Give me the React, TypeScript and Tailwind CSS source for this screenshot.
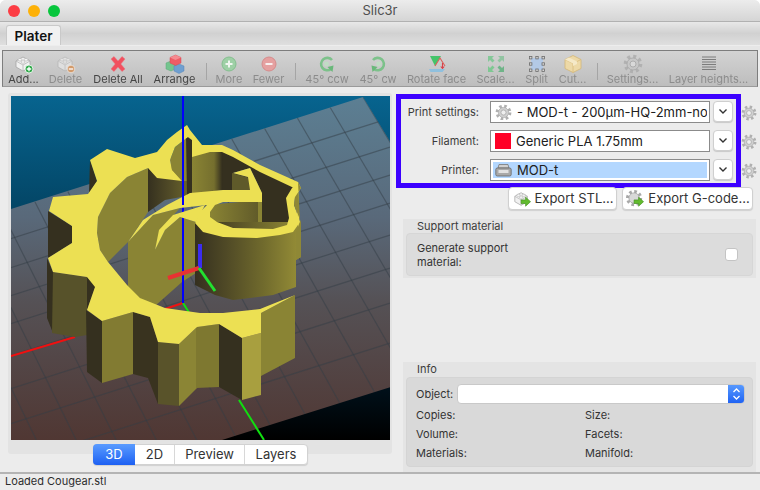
import type { ReactNode } from "react"

const font = "[font-family:Inter,'Liberation_Sans',sans-serif]"

function Brick({ faded = false }: { faded?: boolean }) {
  return (
    <g opacity={faded ? 0.55 : 1}>
      <path d="M2 7 L9 3 L16 7 L16 13 L9 17 L2 13 Z" fill="#f1f1f1" stroke="#a5a5a5" strokeWidth="0.8" />
      <path d="M2 7 L9 11 L16 7 M9 11 V17" fill="none" stroke="#b5b5b5" strokeWidth="0.8" />
      <ellipse cx="6" cy="5.8" rx="2" ry="1.2" fill="#fff" stroke="#aaa" strokeWidth="0.6" />
      <ellipse cx="12" cy="5.8" rx="2" ry="1.2" fill="#fff" stroke="#aaa" strokeWidth="0.6" />
      <ellipse cx="9" cy="8" rx="2" ry="1.2" fill="#fff" stroke="#aaa" strokeWidth="0.6" />
    </g>
  )
}

function GearIcon({ size = 16, className = "" }: { size?: number; className?: string }) {
  return (
    <svg width={size} height={size} viewBox="0 0 20 20" className={className}>
      <circle cx="10" cy="10" r="7.6" fill="none" stroke="#b0b0b0" strokeWidth="3.4" strokeDasharray="3 2.96" />
      <circle cx="10" cy="10" r="6" fill="#d0d0d0" stroke="#a5a5a5" strokeWidth="0.8" />
      <circle cx="10" cy="10" r="3" fill="#efefef" stroke="#a0a0a0" strokeWidth="0.8" />
    </svg>
  )
}

function RotateIcon({ flip = false }: { flip?: boolean }) {
  return (
    <g transform={flip ? "matrix(-1 0 0 1 20 0)" : undefined} opacity="0.85">
      <path d="M15 6 A6.2 6.2 0 1 0 14 15" fill="none" stroke="#6fc07f" strokeWidth="2.6" />
      <path d="M10.5 13 L16.5 11.5 L15.5 18 Z" fill="#58b56c" />
      <circle cx="9.5" cy="10" r="2.4" fill="#bfe0c4" />
    </g>
  )
}

const tools: { label: string; width: string; off?: boolean; icon: ReactNode }[] = [
  {
    label: "Add...",
    width: "w-[29px]",
    icon: (
      <>
        <Brick />
        <circle cx="15" cy="15" r="4" fill="#2fa84a" stroke="#fff" strokeWidth="0.8" />
        <path d="M15 12.8 V17.2 M12.8 15 H17.2" stroke="#fff" strokeWidth="1.3" />
      </>
    ),
  },
  {
    label: "Delete",
    width: "w-[33px]",
    off: true,
    icon: (
      <>
        <Brick faded />
        <circle cx="15" cy="15" r="3.8" fill="#d39a6a" stroke="#eee" strokeWidth="0.7" />
        <path d="M12.8 15 H17.2" stroke="#fff" strokeWidth="1.3" />
      </>
    ),
  },
  {
    label: "Delete All",
    width: "w-[50px]",
    icon: <path d="M3 5 L6 2.5 L10 7 L14 2.5 L17 5 L12.8 10 L17 15 L14 17.5 L10 13 L6 17.5 L3 15 L7.2 10 Z" fill="#f1505f" stroke="#e8757f" strokeWidth="0.5" />,
  },
  {
    label: "Arrange",
    width: "w-[41px]",
    icon: (
      <>
        <path d="M1 9 L6 7 L10 9 V15 L6 17 L1 15 Z" fill="#74c48e" stroke="#5aa877" strokeWidth="0.5" />
        <path d="M9 12 L14 10 L19 12 V17 L14 19.5 L9 17 Z" fill="#6f9fd0" stroke="#5687b8" strokeWidth="0.5" />
        <path d="M5 3.5 L10.5 1 L16 3.5 V9 L10.5 11.5 L5 9 Z" fill="#ee5c66" stroke="#cf4a55" strokeWidth="0.5" />
        <path d="M5 3.5 L10.5 6 L16 3.5 L10.5 1 Z" fill="#f58a90" />
      </>
    ),
  },
  { label: "|", width: "w-[1px]", icon: null },
  {
    label: "More",
    width: "w-[26px]",
    off: true,
    icon: (
      <>
        <circle cx="10" cy="10" r="7" fill="#9ed0a6" stroke="#84bd8e" />
        <path d="M10 6.5 V13.5 M6.5 10 H13.5" stroke="#f0f5f0" strokeWidth="2" />
      </>
    ),
  },
  {
    label: "Fewer",
    width: "w-[31px]",
    off: true,
    icon: (
      <>
        <circle cx="10" cy="10" r="7" fill="#e5a0a0" stroke="#d48b8b" />
        <path d="M6.5 10 H13.5" stroke="#f7eeee" strokeWidth="2" />
      </>
    ),
  },
  { label: "|", width: "w-[1px]", icon: null },
  { label: "45° ccw", width: "w-[44px]", off: true, icon: <RotateIcon /> },
  { label: "45° cw", width: "w-[36px]", off: true, icon: <RotateIcon flip /> },
  {
    label: "Rotate face",
    width: "w-[59px]",
    off: true,
    icon: (
      <>
        <path d="M3 2 H14 L8 12 Z" fill="#45c46a" />
        <path d="M8 12 L13 4 L18 12" fill="none" stroke="#d9605a" strokeWidth="1.1" />
        <path d="M15.5 9 V14 M13.8 12.5 L15.5 14.5 L17.2 12.5" fill="none" stroke="#d9404a" strokeWidth="1.1" />
        <path d="M2 15 H18 L15.5 18 H3.5 Z" fill="#8fc0de" />
      </>
    ),
  },
  {
    label: "Scale...",
    width: "w-[37px]",
    off: true,
    icon: (
      <g fill="#84c898">
        <path d="M2 2 H8 L6 4 L8.5 6.5 L6.5 8.5 L4 6 L2 8 Z" />
        <path d="M18 2 H12 L14 4 L11.5 6.5 L13.5 8.5 L16 6 L18 8 Z" fill="#92c4a2" />
        <path d="M2 18 H8 L6 16 L8.5 13.5 L6.5 11.5 L4 14 L2 12 Z" fill="#7ec892" />
        <path d="M18 18 H12 L14 16 L11.5 13.5 L13.5 11.5 L16 14 L18 12 Z" fill="#6fb488" />
      </g>
    ),
  },
  {
    label: "Split",
    width: "w-[23px]",
    off: true,
    icon: (
      <>
        <rect x="4" y="4" width="12" height="12" fill="#b3c9e6" />
        <g fill="#d5d5d5" stroke="#6b6b6b" strokeWidth="0.8">
          <rect x="2.5" y="2.5" width="2.4" height="2.4" />
          <rect x="15" y="2.5" width="2.4" height="2.4" />
          <rect x="2.5" y="15" width="2.4" height="2.4" />
          <rect x="15" y="15" width="2.4" height="2.4" />
          <rect x="8.8" y="2.5" width="2.4" height="2.4" />
          <rect x="8.8" y="15" width="2.4" height="2.4" />
          <rect x="2.5" y="8.8" width="2.4" height="2.4" />
          <rect x="15" y="8.8" width="2.4" height="2.4" />
        </g>
      </>
    ),
  },
  {
    label: "Cut...",
    width: "w-[27px]",
    off: true,
    icon: (
      <>
        <path d="M10 1.5 L18 5.5 V14.5 L10 18.5 L2 14.5 V5.5 Z" fill="#edd9a7" stroke="#d3b676" strokeWidth="0.8" />
        <path d="M2 5.5 L10 9.5 L18 5.5 M10 9.5 V18.5" fill="none" stroke="#d8bb7b" strokeWidth="0.8" />
        <path d="M6 3.5 L14 7.5 V10 L10 12 V9.5 L2 5.5 Z" fill="#f5e9c8" />
      </>
    ),
  },
  { label: "|", width: "w-[1px]", icon: null },
  { label: "Settings...", width: "w-[51px]", off: true, icon: <g opacity="0.75"><circle cx="10" cy="10" r="7.6" fill="none" stroke="#a8a8a8" strokeWidth="3.4" strokeDasharray="3 2.96" /><circle cx="10" cy="10" r="6" fill="#c6c6c6" stroke="#9b9b9b" strokeWidth="0.8" /><circle cx="10" cy="10" r="3" fill="#dedede" stroke="#979797" strokeWidth="0.8" /></g> },
  {
    label: "Layer heights...",
    width: "w-[79px]",
    off: true,
    icon: <path d="M3 3 H17 M3 5.5 H17 M3 8 H17 M3 10.5 H17 M3 13 H17 M3 15.5 H17" stroke="#7c7c7c" strokeWidth="1" />,
  },
]

function Toolbar() {
  return (
    <div className="mx-[2px] h-[37px] flex items-start gap-[11px] pl-[6px] border border-[#7d7d7d] border-b-[#9a9a9a] bg-gradient-to-b from-[#d3d3d3] to-[#bdbdbd]">
      {tools.map((tool, index) =>
        tool.icon === null ? (
          <div key={index} className="w-px h-[17px] mt-[12px] -mr-[2px] bg-[#a5a5a5]" />
        ) : (
          <div key={index} className={`${tool.width} shrink-0 flex flex-col items-center pt-[3px] blur-[0.4px]`}>
            <svg width="20" height="20" viewBox="0 0 20 20" className="shrink-0">
              {tool.icon}
            </svg>
            <span className={`-mt-[1px] whitespace-nowrap text-[11px] leading-[13px] ${tool.off ? "text-[#8c8c8c]" : "text-[#454545]"}`}>{tool.label}</span>
          </div>
        ),
      )}
    </div>
  )
}

const GRID_A = Array.from({ length: 18 }, (_, k) => {
  const x0 = 363 - 32.8 * k
  const y0 = 97 + 10.5 * k
  const s = 0.6 - 0.009 * k
  return { x1: x0, y1: y0, x2: x0 + s * 420, y2: y0 + 420 }
})

const GRID_B = [118, 147, 175, 203, 235, 268, 303, 343].map((y) => ({
  x1: 390,
  y1: y,
  x2: -10,
  y2: y + 400 * 0.318,
}))

function Viewport() {
  return (
    <svg viewBox="11 96 379 344" width="379" height="344" className="block">
      <defs>
        <linearGradient id="sky" x1="0" y1="0" x2="0" y2="1">
          <stop offset="0" stopColor="#07648f" />
          <stop offset="0.33" stopColor="#034565" />
          <stop offset="0.85" stopColor="#00101a" />
          <stop offset="1" stopColor="#000000" />
        </linearGradient>
        <linearGradient id="plate" x1="0" y1="0" x2="0" y2="1">
          <stop offset="0" stopColor="#5c7f93" />
          <stop offset="0.35" stopColor="#59697a" />
          <stop offset="0.6" stopColor="#555155" />
          <stop offset="1" stopColor="#503733" />
        </linearGradient>
        <linearGradient id="drum" gradientUnits="userSpaceOnUse" x1="195" y1="0" x2="301" y2="0">
          <stop offset="0" stopColor="#35301f" />
          <stop offset="0.3" stopColor="#504a26" />
          <stop offset="0.65" stopColor="#716b2d" />
          <stop offset="1" stopColor="#978f37" />
        </linearGradient>
        <linearGradient id="back" gradientUnits="userSpaceOnUse" x1="148" y1="0" x2="192" y2="0">
          <stop offset="0" stopColor="#35301f" />
          <stop offset="0.5" stopColor="#514b27" />
          <stop offset="1" stopColor="#6e682c" />
        </linearGradient>
        <linearGradient id="loop" gradientUnits="userSpaceOnUse" x1="210" y1="0" x2="262" y2="0">
          <stop offset="0" stopColor="#8a8434" />
          <stop offset="1" stopColor="#5e5829" />
        </linearGradient>
        <linearGradient id="rear" gradientUnits="userSpaceOnUse" x1="192" y1="0" x2="232" y2="0">
          <stop offset="0" stopColor="#8a8434" />
          <stop offset="0.55" stopColor="#756f2e" />
          <stop offset="0.75" stopColor="#35301f" />
          <stop offset="1" stopColor="#35301f" />
        </linearGradient>
        <clipPath id="plateClip">
          <polygon points="363,97 400,158 400,384 222,440 11,440 11,209" />
        </clipPath>
      </defs>

      <rect x="11" y="96" width="379" height="344" fill="url(#sky)" />
      <polygon points="363,97 400,158 400,384 222,440 11,440 11,209" fill="url(#plate)" />
      <g clipPath="url(#plateClip)" stroke="#333d45" strokeOpacity="0.5" strokeWidth="1.2">
        {GRID_A.map((l, i) => (
          <line key={i} {...l} />
        ))}
        {GRID_B.map((l, i) => (
          <line key={i} {...l} />
        ))}
      </g>

      {/* axes under the model */}
      <line x1="11" y1="356" x2="75" y2="337" stroke="#f01010" strokeWidth="2" />
      <line x1="239" y1="400" x2="264" y2="440" stroke="#10e010" strokeWidth="2" />
      <line x1="183" y1="303" x2="165" y2="309" stroke="#f01010" strokeWidth="2" />
      <line x1="183" y1="303" x2="190" y2="314" stroke="#10e010" strokeWidth="2" />

      {/* outer walls */}
      <polygon points="47,258 53,272 53,333 47,318" fill="#35301f" />
      <polygon points="53,272 87,277 87,335 75,337 52,333" fill="#57522a" />
      <polygon points="87,277 96,285 87,310" fill="#35301f" />
      <polygon points="86,310 102,321 102,383 87,372" fill="#35301f" />
      <polygon points="102,321 133,312 133,374 102,383" fill="#827b32" />
      <polygon points="133,312 150,317 158,342 158,404 148,378 133,374" fill="#39331f" />
      <polygon points="158,342 179,344 179,406 158,404" fill="#59532a" />
      <polygon points="179,344 197,327 197,388 179,406" fill="#8b8535" />
      <polygon points="196,327 219,324 219,387 196,388" fill="#7e7830" />
      <polygon points="219,324 242,338 242,400 219,387" fill="#35301f" />
      <polygon points="242,338 261,333 261,395 242,400" fill="#a89f3f" />
      <polygon points="261,313 295,295 295,358 261,376" fill="#8a8434" />
      <polygon points="48,211 72,226 72,243 48,258" fill="#35301f" />
      <polygon points="90,160 97,181 89,194" fill="#35301f" />

      {/* walls seen through the ring */}
      <polygon points="148,168 127,177 110,193 98,217 97,233 100,250 108,262 128,242 148,212" fill="#8a8434" />
      <polygon points="148,165 192,165 192,195 165,200 148,212" fill="url(#back)" />
      <polygon points="188,137 175,147 170,160 172,170 182,181 192,181 192,140" fill="#8a8434" />
      <polygon points="186,136 192,140 192,195 187,195" fill="#35301f" />
      <polygon points="192,150 222,148 233,173 223,190 192,195" fill="url(#rear)" />
      <polygon points="222,150 235,155 262,170 294,186 288,226 262,232 262,193 250,168 233,173 248,177 250,190 223,190" fill="#35301f" />
      <polygon points="232,173 250,178 250,190 232,190" fill="#5f5a2a" />
      <polygon points="128,242 153,215 180,208 160,230 155,250 155,306 128,292" fill="#8a8434" />
      <polygon points="155,250 165,230 180,217 196,222 196,273 182,282 155,306" fill="#8a8434" />
      <polygon points="207,205 262,200 262,230 210,222" fill="url(#loop)" />
      <polygon points="258,195 262,195 262,230 258,230" fill="#8a8434" />
      <line x1="183" y1="96" x2="183" y2="303" stroke="#0000ff" strokeWidth="2" />
      <polygon points="195,222 301,222 301,257 296,260 296,287 273,295 233,300 215,295 195,285" fill="url(#drum)" />
      <rect x="198" y="244" width="4" height="24" fill="#3b2cf0" />
      <line x1="199" y1="268" x2="168" y2="278" stroke="#e83232" strokeWidth="4" />
      <line x1="199" y1="268" x2="215" y2="291" stroke="#22e030" strokeWidth="3" />

      {/* top face */}
      <path
        fillRule="evenodd"
        fill="#ece053"
        d="M187,125 L177,132 L167,140 L157,152 L135,158 L107,149 L90,160 L97,181 L88,194 L53,197 L49,211 L72,226 L72,243 L48,258 L53,272 L87,277 L95,287 L87,310 L102,321 L133,312 L150,317 L158,342 L179,344 L197,327 L219,324 L242,338 L261,333 L261,313 L295,295 L300,240 L298,182 L260,165 L233,150 L222,145 L202,145 L190,130 Z
        M148,168 L127,177 L110,193 L98,217 L97,233 L100,250 L108,262 L127,285 L140,298 L165,308 L200,313 L223,313 L260,309 L295,295 L300,240 L294,188 L260,172 L233,157 L222,152 L210,152 L192,157 L192,140 L188,137 L175,147 L170,160 L172,170 L182,181 L157,178 Z"
      />
      <polygon points="128,242 143,220 167,205 190,193 223,190 250,190 248,177 233,173 250,168 262,193 262,202 223,202 215,205 207,205 180,208 153,215" fill="#ece053" />
      <polygon points="155,250 159,230 173,215 205,205 196,222 180,217 165,230" fill="#ece053" />
      <polygon points="207,205 200,212 195,223 203,232 223,237 257,238 280,235 293,232 300,222 294,205 295,197 301,188 298,182 292,188 286,198 289,218 287,225 273,229 233,228 217,222 210,217 210,212 215,205" fill="#ece053" />
      <polygon points="298,182 301,188 295,197 294,205 301,222 301,257 296,260 296,232 300,222" fill="#8f8836" />
      <line x1="183" y1="96" x2="183" y2="205" stroke="#0000ff" strokeWidth="2" />
    </svg>
  )
}

function SettingRow({ label, children, selected = false }: { label: string; children: ReactNode; selected?: boolean }) {
  return (
    <div className="flex items-start h-[22px]">
      <span className="w-[78px] pr-0 text-right text-[11px] leading-[22px] text-[#3c3c3c] whitespace-nowrap">{label}</span>
      <div className="ml-[11px] w-[220px] h-[22px] border border-[#8b8b8b] bg-white p-[2px]">
        <div className={`h-full flex items-center gap-[5px] pl-[2px] overflow-hidden whitespace-nowrap text-[13px] text-[#202020] ${selected ? "bg-[#b3d7ff]" : ""}`}>{children}</div>
      </div>
      <div className="ml-[3px] w-[20px] h-[21px] rounded-[4px] bg-white border border-[#cfcfcf] shadow-[0_1px_1px_rgba(0,0,0,0.15)] flex items-center justify-center">
        <svg width="10" height="7" viewBox="0 0 10 7">
          <path d="M1.5 1.5 L5 5 L8.5 1.5" fill="none" stroke="#333" strokeWidth="1.4" />
        </svg>
      </div>
    </div>
  )
}

function ExportButton({ label, width, gear = false }: { label: string; width: string; gear?: boolean }) {
  return (
    <div className={`${width} h-[23px] rounded-[4px] bg-white border border-[#d0d0d0] shadow-[0_1px_1px_rgba(0,0,0,0.12)] flex items-center justify-center gap-[3px] text-[13px] text-[#333] whitespace-nowrap`}>
      <svg width="20" height="18" viewBox="0 0 20 20">
        {gear ? <g transform="translate(-1 -1)"><circle cx="10" cy="10" r="7.4" fill="none" stroke="#a8a8a8" strokeWidth="3.2" strokeDasharray="3 2.8" /><circle cx="10" cy="10" r="5.8" fill="#d8d8d8" stroke="#9b9b9b" strokeWidth="0.8" /></g> : <Brick />}
        <path d="M9 11 H14 V8 L19.5 13 L14 18 V15 H9 Z" fill="#62bb2e" stroke="#3f8f1d" strokeWidth="0.7" />
      </svg>
      {label}
    </div>
  )
}

export default function App() {
  return (
    <div className={`${font} w-[760px] h-[490px] overflow-hidden bg-white`}>
      <div className="h-full flex flex-col bg-[#ececec] rounded-t-[6px] overflow-hidden">
        <div className="relative h-[22px] shrink-0 flex items-center justify-center border-b border-[#b1b1b1] bg-gradient-to-b from-[#ececec] to-[#d5d5d5] text-[13px] text-[#4f4f4f]">
          <div className="absolute left-[8px] top-[5px] flex gap-[8px]">
            <span className="w-[12px] h-[12px] rounded-full bg-[#fc3d44]" />
            <span className="w-[12px] h-[12px] rounded-full bg-[#fdb108]" />
            <span className="w-[12px] h-[12px] rounded-full bg-[#08c63d]" />
          </div>
          Slic3r
        </div>

        <div className="h-[24px] shrink-0 flex items-end pl-[6px] border-b border-[#ededed] bg-gradient-to-b from-[#e8e8e8] via-[#d1d1d1] to-[#dfdfdf]">
          <div className="w-[55px] h-[20px] rounded-t-[3px] border border-b-0 border-[#c9c9c9] bg-[#f1f1f1] text-center text-[13.5px] leading-[21px] font-semibold text-[#111]">Plater</div>
        </div>
        <div className="h-[4px] shrink-0 bg-[#e6e6e6]" />
        <Toolbar />

        <div className="flex-1 min-h-0 flex">
          <div className="ml-[8px] w-[384px] shrink-0 flex flex-col items-center">
            <div className="mt-[6px] w-full h-[361px] rounded-[3px] bg-[#e3e3e3] pl-[3px] pt-[3px]">
              <Viewport />
            </div>
            <div className="-mt-[10px] ml-px h-[21px] flex rounded-[4px] bg-white border border-[#d2d2d2] shadow-[0_1px_1px_rgba(0,0,0,0.12)] text-[13px] leading-[19px] text-[#333] text-center">
              <span className="w-[42px] -ml-px -my-px leading-[21px] rounded-l-[4px] bg-gradient-to-b from-[#5a9bff] to-[#1d5ff2] text-white">3D</span>
              <span className="w-[40px] border-r border-[#d8d8d8]">2D</span>
              <span className="w-[70px] border-r border-[#d8d8d8]">Preview</span>
              <span className="w-[62px]">Layers</span>
            </div>
          </div>

          <div className="ml-[4px] flex-1 min-w-0 flex flex-col">
            <div className="mt-[7px] flex">
              <div className="w-[345px] h-[94px] shrink-0 border-[5px] border-[#3c00ff] pt-[2px] flex flex-col gap-[7px]">
                <SettingRow label="Print settings:">
                  <GearIcon size={17} className="shrink-0" />
                  <span className="pt-px">- MOD-t - 200µm-HQ-2mm-no</span>
                </SettingRow>
                <SettingRow label="Filament:">
                  <span className="w-[16px] h-[16px] shrink-0 bg-[#ff0026]" />
                  <span className="pt-px">Generic PLA 1.75mm</span>
                </SettingRow>
                <SettingRow label="Printer:" selected>
                  <svg width="17" height="14" viewBox="0 0 17 14" className="shrink-0">
                    <path d="M3 5 L4 1.5 H13 L14 5 Z" fill="#cfcfcf" stroke="#777" strokeWidth="0.8" />
                    <rect x="0.8" y="5" width="15.4" height="8" rx="1.5" fill="#a9a9a9" stroke="#666" strokeWidth="0.8" />
                    <rect x="3.5" y="7" width="10" height="3" fill="#e2e2e2" />
                  </svg>
                  <span className="pt-px">MOD-t</span>
                </SettingRow>
              </div>
              <div className="flex flex-col pt-[11px] gap-[13px]">
                <GearIcon size={16} />
                <GearIcon size={16} />
                <GearIcon size={16} />
              </div>
            </div>

            <div className="-mt-[1px] pr-[7px] flex justify-end gap-[5px]">
              <ExportButton label="Export STL..." width="w-[109px]" />
              <ExportButton label="Export G-code..." width="w-[131px]" gear />
            </div>

            <div className="mt-[9px] ml-[7px] mr-[4px] h-[59px] bg-[#e4e4e4] px-[3px]">
              <div className="h-[14px] pl-[11px] text-[11px] leading-[14px] text-[#3c3c3c]">Support material</div>
              <div className="h-[43px] rounded-[4px] bg-[#dcdcdc] border border-[#d6d6d6] pl-[10px] pr-[14px] flex items-center justify-between">
                <span className="w-[110px] text-[11px] leading-[14px] text-[#333]">Generate support material:</span>
                <span className="w-[13px] h-[13px] rounded-[3px] bg-white border border-[#c4c4c4]" />
              </div>
            </div>

            <div className="mt-auto ml-[7px] mr-[4px] h-[110px] bg-[#e4e4e4] px-[3px]">
              <div className="h-[15px] pl-[11px] text-[11px] leading-[14px] text-[#3c3c3c]">Info</div>
              <div className="h-[90px] rounded-[4px] bg-[#d9d9d9] border border-[#d4d4d4] pl-[9px] pr-[7px] pt-[6px]">
                <div className="flex items-center h-[20px] text-[11px] text-[#333]">
                  <span className="w-[41px]">Object:</span>
                  <div className="flex-1 h-[20px] rounded-[4px] bg-white border border-[#c9c9c9] flex justify-end overflow-hidden">
                    <span className="w-[16px] -my-px bg-gradient-to-b from-[#5a9bff] to-[#1d5ff2] flex items-center justify-center">
                      <svg width="9" height="14" viewBox="0 0 9 14">
                        <path d="M1.5 5 L4.5 2 L7.5 5 M1.5 9 L4.5 12 L7.5 9" fill="none" stroke="#fff" strokeWidth="1.3" />
                      </svg>
                    </span>
                  </div>
                </div>
                <div className="mt-[2px] grid grid-cols-[169px_1fr] text-[11px] leading-[19px] text-[#333]">
                  <span>Copies:</span>
                  <span>Size:</span>
                  <span>Volume:</span>
                  <span>Facets:</span>
                  <span>Materials:</span>
                  <span>Manifold:</span>
                </div>
              </div>
            </div>
          </div>
        </div>

        <div className="h-[18px] shrink-0 border-t-2 border-[#b4b4b4] pl-[5px] text-[11px] leading-[14px] text-[#2c2c2c]">Loaded Cougear.stl</div>
      </div>
    </div>
  )
}
